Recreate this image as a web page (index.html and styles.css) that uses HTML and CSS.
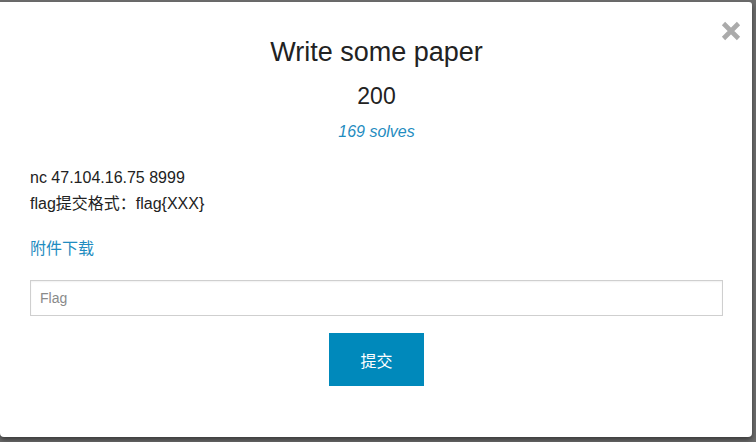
FILE: index.html
```html
<!DOCTYPE html>
<html lang="zh">
<head>
<meta charset="utf-8">
<title>Write some paper</title>
<link rel="stylesheet" href="styles.css">
</head>
<body>
<div class="modal">
  <button class="close" aria-label="Close">
    <svg width="20" height="20" viewBox="0 0 20 20"><path d="M2.5 2.5 L17.5 17.5 M17.5 2.5 L2.5 17.5" stroke="#ababab" stroke-width="4.6" stroke-linecap="butt"/></svg>
  </button>
  <h1 class="title">Write some paper</h1>
  <div class="points">200</div>
  <div class="solves">169 solves</div>
  <div class="desc">
    <p>nc 47.104.16.75 8999</p>
    <p>flag提交格式：flag{XXX}</p>
  </div>
  <a class="file" href="#">附件下载</a>
  <input class="flag" type="text" placeholder="Flag">
  <div class="actions"><button class="submit">提交</button></div>
</div>
</body>
</html>
```
FILE: styles.css
```css
* { box-sizing: border-box; }
html, body { margin: 0; padding: 0; }
body {
  background: #6c6c6c;
  width: 756px;
  height: 442px;
  overflow: hidden;
  font-family: "Liberation Sans", Arial, "Noto Sans CJK SC", sans-serif;
  color: #222;
}
.modal {
  position: relative;
  margin-top: 2px;
  width: 752px;
  height: 435px;
  background: #fff;
  border-radius: 0 3px 4px 4px;
  box-shadow: 0 3px 5px rgba(0,0,0,0.45);
  padding: 34px 29px 0 30px;
}
.close {
  position: absolute;
  top: 19px;
  right: 11px;
  padding: 0;
  border: 0;
  background: none;
  line-height: 0;
}
.title {
  margin: 0;
  text-align: center;
  font-weight: normal;
  font-size: 27px;
  line-height: 32px;
  color: #222;
}
.points {
  margin-top: 14px;
  text-align: center;
  font-size: 23px;
  line-height: 28px;
}
.solves {
  margin-top: 11px;
  text-align: center;
  font-size: 16px;
  line-height: 22px;
  font-style: italic;
  color: #1f8cc0;
}
.desc { margin-top: 22px; }
.desc p {
  margin: 0;
  font-size: 16px;
  line-height: 26px;
}
.file {
  display: block;
  margin-top: 17px;
  font-size: 16px;
  line-height: 26px;
  color: #1f8cc0;
  text-decoration: none;
  font-family: "Noto Sans CJK SC", sans-serif;
}
.flag {
  display: block;
  margin-top: 20px;
  width: 693px;
  height: 36px;
  border: 1px solid #cfcfcf;
  box-shadow: inset 0 1px 2px rgba(0,0,0,0.06);
  padding: 0 9px;
  font-family: "Liberation Sans", Arial, sans-serif;
  font-size: 14px;
  color: #333;
  outline: none;
}
.flag::placeholder { color: #8a8a8a; }
.actions {
  margin-top: 17px;
  display: flex;
  justify-content: center;
}
.submit {
  width: 95px;
  height: 53px;
  border: 0;
  background: #0089bb;
  color: #fff;
  font-family: "Noto Sans CJK SC", sans-serif;
  font-size: 16px;
}
```
